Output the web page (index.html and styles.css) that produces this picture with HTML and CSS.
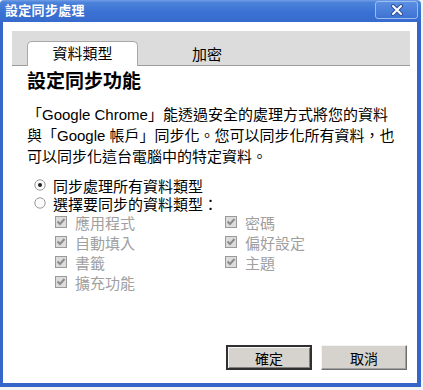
FILE: index.html
```html
<!DOCTYPE html>
<html lang="zh-Hant">
<head>
<meta charset="utf-8">
<title>設定同步處理</title>
<link rel="stylesheet" href="styles.css">
</head>
<body>
<div class="window">
  <div class="titlebar">
    <span class="title">設定同步處理</span>
    <span class="close">
      <svg width="14" height="12" viewBox="0 0 14 12">
        <path d="M3 2 L11 10 M11 2 L3 10" stroke="#33539e" stroke-width="4" stroke-linecap="round" fill="none"/>
        <path d="M3 2 L11 10 M11 2 L3 10" stroke="#ffffff" stroke-width="2" stroke-linecap="round" fill="none"/>
      </svg>
    </span>
  </div>
  <div class="body">
    <div class="tabs">
      <div class="tab active">資料類型</div>
      <div class="tab">加密</div>
    </div>
    <div class="content">
      <h1 class="heading">設定同步功能</h1>
      <p class="desc">「Google Chrome」能透過安全的處理方式將您的資料<br>與「Google 帳戶」同步化。您可以同步化所有資料，也<br>可以同步化這台電腦中的特定資料。</p>
      <div class="radios">
        <div class="radio">
          <svg class="rb" width="12" height="12" viewBox="0 0 12 12"><circle cx="6" cy="6" r="5.2" fill="#fbfbfb" stroke="#9a9a9a"/><circle cx="6" cy="6" r="2" fill="#222"/></svg>
          <span>同步處理所有資料類型</span>
        </div>
        <div class="radio">
          <svg class="rb" width="12" height="12" viewBox="0 0 12 12"><circle cx="6" cy="6" r="5.2" fill="#fbfbfb" stroke="#9a9a9a"/></svg>
          <span>選擇要同步的資料類型：</span>
        </div>
      </div>
      <div class="checks">
        <div class="check"><svg class="cb" width="12" height="12" viewBox="0 0 12 12"><rect x="0.5" y="0.5" width="11" height="11" fill="#dcdcdc" stroke="#9a9a9a"/><path d="M2.5 5.5 L5 8 L9.5 3" stroke="#8c8c8c" stroke-width="2" fill="none"/></svg><span>應用程式</span></div>
        <div class="check"><svg class="cb" width="12" height="12" viewBox="0 0 12 12"><rect x="0.5" y="0.5" width="11" height="11" fill="#dcdcdc" stroke="#9a9a9a"/><path d="M2.5 5.5 L5 8 L9.5 3" stroke="#8c8c8c" stroke-width="2" fill="none"/></svg><span>密碼</span></div>
        <div class="check"><svg class="cb" width="12" height="12" viewBox="0 0 12 12"><rect x="0.5" y="0.5" width="11" height="11" fill="#dcdcdc" stroke="#9a9a9a"/><path d="M2.5 5.5 L5 8 L9.5 3" stroke="#8c8c8c" stroke-width="2" fill="none"/></svg><span>自動填入</span></div>
        <div class="check"><svg class="cb" width="12" height="12" viewBox="0 0 12 12"><rect x="0.5" y="0.5" width="11" height="11" fill="#dcdcdc" stroke="#9a9a9a"/><path d="M2.5 5.5 L5 8 L9.5 3" stroke="#8c8c8c" stroke-width="2" fill="none"/></svg><span>偏好設定</span></div>
        <div class="check"><svg class="cb" width="12" height="12" viewBox="0 0 12 12"><rect x="0.5" y="0.5" width="11" height="11" fill="#dcdcdc" stroke="#9a9a9a"/><path d="M2.5 5.5 L5 8 L9.5 3" stroke="#8c8c8c" stroke-width="2" fill="none"/></svg><span>書籤</span></div>
        <div class="check"><svg class="cb" width="12" height="12" viewBox="0 0 12 12"><rect x="0.5" y="0.5" width="11" height="11" fill="#dcdcdc" stroke="#9a9a9a"/><path d="M2.5 5.5 L5 8 L9.5 3" stroke="#8c8c8c" stroke-width="2" fill="none"/></svg><span>主題</span></div>
        <div class="check"><svg class="cb" width="12" height="12" viewBox="0 0 12 12"><rect x="0.5" y="0.5" width="11" height="11" fill="#dcdcdc" stroke="#9a9a9a"/><path d="M2.5 5.5 L5 8 L9.5 3" stroke="#8c8c8c" stroke-width="2" fill="none"/></svg><span>擴充功能</span></div>
      </div>
    </div>
    <div class="footer">
      <button class="btn default">確定</button>
      <button class="btn">取消</button>
    </div>
  </div>
</div>
</body>
</html>
```
FILE: styles.css
```css
html, body {
  margin: 0;
  padding: 0;
  background: #f4f4f4;
}
body {
  font-family: "Liberation Sans", "Noto Sans CJK TC", sans-serif;
  color: #000;
}
.window {
  width: 421px;
  height: 387px;
  display: flex;
  flex-direction: column;
  background: #fff;
}
.titlebar {
  height: 22px;
  flex: none;
  display: flex;
  align-items: flex-start;
  justify-content: space-between;
  background: linear-gradient(to bottom, #6f9ce6 0%, #4a82da 12%, #3b71d2 55%, #366bcd 100%);
  border-radius: 4px 4px 0 0;
}
.title {
  color: #fff;
  font-weight: bold;
  font-size: 13px;
  line-height: 22px;
  padding-left: 5px;
  letter-spacing: 0.3px;
}
.close {
  margin-top: 1px;
  margin-right: 3px;
  width: 41px;
  height: 16px;
  border: 1px solid #9cbdf0;
  border-radius: 3px;
  background: linear-gradient(to bottom, #5b8fe2, #3d72d2);
  display: flex;
  align-items: center;
  justify-content: center;
}
.body {
  flex: 1;
  display: flex;
  flex-direction: column;
  border-left: 3px solid #3565c9;
  border-right: 4px solid #3565c9;
  border-bottom: 4px solid #3565c9;
  padding: 9px 7px 13px 9px;
}
.tabs {
  height: 34px;
  background: #dcdcdc;
  border-bottom: 1px solid #9c9c9c;
  display: flex;
  align-items: flex-end;
  padding-left: 15px;
}
.tab {
  font-size: 15px;
  line-height: 23px;
  height: 23px;
  text-align: center;
  margin-bottom: -1px;
}
.tab.active {
  width: 109px;
  background: #fff;
  border: 1px solid #a8a8a8;
  border-bottom: none;
  border-radius: 5px 5px 0 0;
  height: 24px;
}
.tab:not(.active) {
  width: 138px;
}
.content {
  padding: 0 15px 0 15px;
  font-size: 15px;
}
.heading {
  margin: 4px 0 0 0;
  font-size: 19px;
  line-height: 24px;
  font-weight: bold;
}
.desc {
  margin: 10px 0 0 0;
  font-size: 15px;
  line-height: 21px;
  white-space: nowrap;
}
.radios {
  margin-top: 9px;
  padding-left: 7px;
}
.radio {
  display: flex;
  align-items: center;
  gap: 7px;
  height: 18px;
  font-size: 15px;
}
.checks {
  margin-top: 0;
  padding-left: 28px;
  display: grid;
  grid-template-columns: 170px 1fr;
  grid-auto-rows: 20px;
  color: #a0a0a0;
  font-size: 15px;
}
.check {
  display: flex;
  align-items: center;
  gap: 8px;
}
.footer {
  margin-top: auto;
  display: flex;
  justify-content: flex-end;
  gap: 9px;
  padding-right: 3px;
}
.btn {
  width: 86px;
  height: 25px;
  font-family: "Liberation Sans", "Noto Sans CJK TC", sans-serif;
  font-size: 14px;
  color: #000;
  background: #d6d3ce;
  border: 1px solid;
  border-color: #f4f4f4 #707070 #707070 #f4f4f4;
  box-shadow: inset -1px -1px 0 #a0a0a0;
  padding: 0;
  margin: 0;
}
.btn.default {
  border: 2px solid #303030;
  box-shadow: inset 1px 1px 0 #f4f4f4, inset -1px -1px 0 #808080;
}
```
